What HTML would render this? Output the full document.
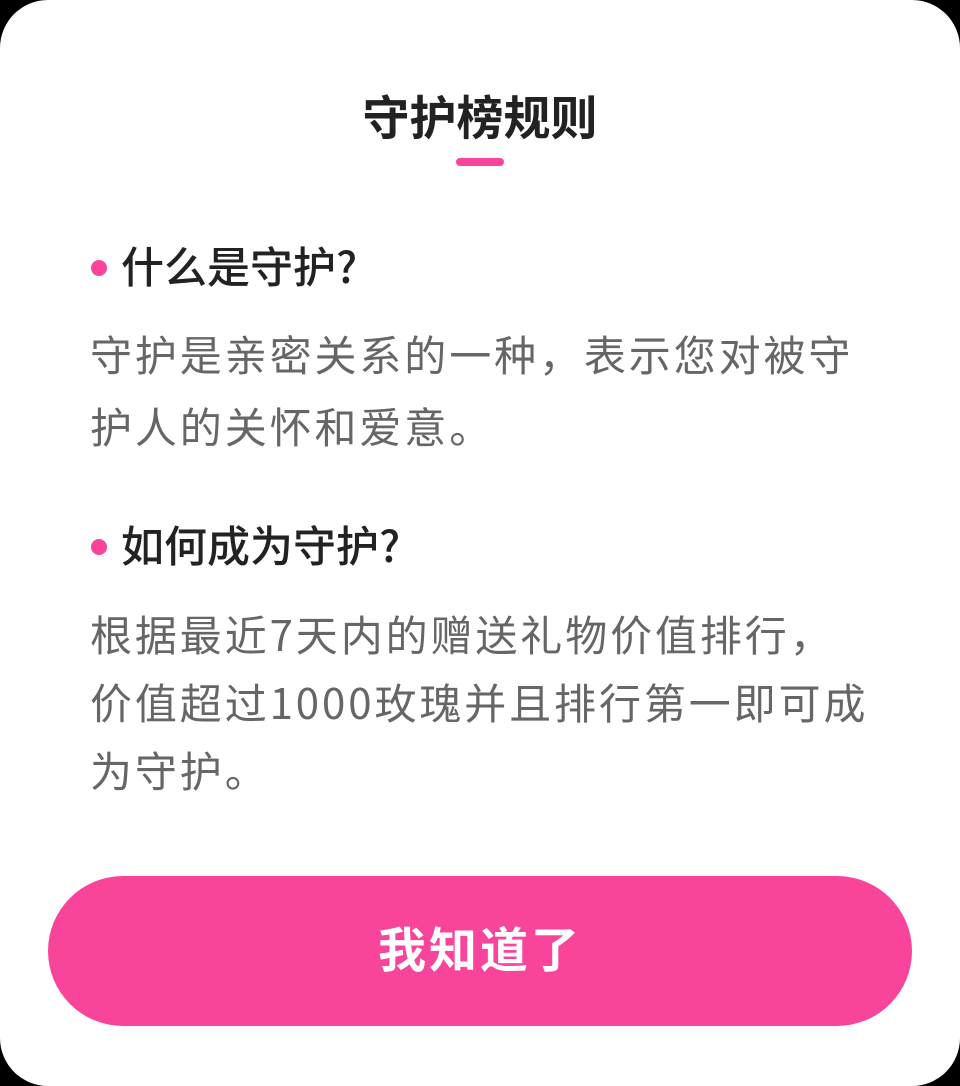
<!DOCTYPE html>
<html><head><meta charset="utf-8"><style>
html,body{margin:0;padding:0;background:#000;}
body{width:960px;height:1086px;overflow:hidden;font-family:"Noto Sans CJK SC",sans-serif;}
.card{position:absolute;left:0;top:0;width:960px;height:1086px;background:#fff;border-radius:48px;}
.title{position:absolute;left:0;width:960px;top:85px;text-align:center;font-size:47px;font-weight:bold;color:#222;line-height:60px;}
.bar{position:absolute;left:456px;top:158px;width:48px;height:8px;border-radius:4px;background:#f8449a;}
.h{position:absolute;left:121px;font-size:43px;color:#222;line-height:56px;font-weight:500;}
.dot{position:absolute;left:91px;width:16px;height:16px;border-radius:50%;background:#f8449a;}
.p{position:absolute;left:90px;font-size:42px;color:#666;letter-spacing:2.9px;white-space:nowrap;}
.btn{position:absolute;left:48px;top:876px;width:864px;height:150px;border-radius:75px;background:#f8449a;color:#fff;text-align:center;line-height:140px;font-size:48px;font-weight:bold;letter-spacing:3px;}
</style></head><body>
<div class="card">
<div class="title">守护榜规则</div>
<div class="bar"></div>
<div class="dot" style="top:260px"></div>
<div class="h" style="top:237px">什么是守护?</div>
<div class="p" style="top:318px;line-height:72px">守护是亲密关系的一种，表示您对被守<br>护人的关怀和爱意。</div>
<div class="dot" style="top:539px"></div>
<div class="h" style="top:516px">如何成为守护?</div>
<div class="p" style="top:600px;line-height:68px">根据最近7天内的赠送礼物价值排行，<br>价值超过1000玫瑰并且排行第一即可成<br>为守护。</div>
<div class="btn">我知道了</div>
</div>
</body></html>
